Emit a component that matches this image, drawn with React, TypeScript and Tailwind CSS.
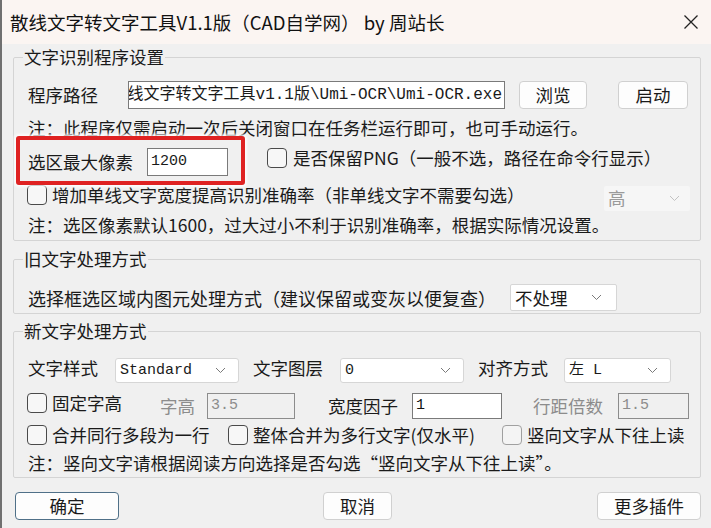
const SANS = "font-['Noto_Sans_CJK_SC',sans-serif]";
const MONO = "font-['Liberation_Mono','Noto_Sans_CJK_SC',monospace]";

function Check({ light }: { light?: boolean }) {
  return (
    <span
      className={
        light
          ? 'block w-[20px] h-[20px] shrink-0 rounded-[4px] border border-[#a0a0a0] bg-[#f4f4f4]'
          : 'block w-[20px] h-[20px] shrink-0 rounded-[4px] border border-[#4a4a4a] bg-[#f7f7f7]'
      }
    />
  );
}

function Chevron({ light }: { light?: boolean }) {
  return (
    <svg width="11" height="7" viewBox="0 0 11 7" className="shrink-0">
      <path d="M1 1l4.5 4.5L10 1" fill="none" stroke={light ? '#c2c2c2' : '#7a7a7a'} strokeWidth="1" />
    </svg>
  );
}

function Select({ value, w, mono }: { value: string; w: string; mono?: boolean }) {
  return (
    <div className={`${w} h-[25px] flex items-center justify-between bg-white border border-[#d6d6d6] rounded-[3px] pl-[4px] pr-[12px]`}>
      <span className={mono ? `${MONO} text-[15px] leading-none text-[#1a1a1a]` : 'leading-none text-[#1a1a1a]'}>{value}</span>
      <Chevron />
    </div>
  );
}

function Box({ value, w, disabled }: { value: string; w: string; disabled?: boolean }) {
  return (
    <div
      className={
        disabled
          ? `${w} h-[26px] flex items-center border border-[#8c8c8c] bg-[#f0f0f0] pl-[3px] ${MONO} text-[15px] text-[#8c8c8c]`
          : `${w} h-[26px] flex items-center border border-[#7a7a7a] bg-white pl-[3px] ${MONO} text-[15px] text-[#111]`
      }
    >
      {value}
    </div>
  );
}

function Btn({ label, w, focus }: { label: string; w: string; focus?: boolean }) {
  return (
    <div
      className={
        focus
          ? `${w} h-[28px] flex items-center justify-center rounded-[4px] border border-[#4f7088] bg-[#fdfdfd] text-[#1a1a1a]`
          : `${w} h-[28px] flex items-center justify-center rounded-[4px] border border-[#d0d0d0] bg-[#fdfdfd] text-[#1a1a1a]`
      }
    >
      {label}
    </div>
  );
}

export default function App() {
  return (
    <div className={`${SANS} w-[711px] h-[528px] overflow-hidden bg-[#f0f0f0] border-l-2 border-[#707070] text-[#1a1a1a] leading-[22px] text-[17.5px]`}>
      {/* 标题栏 */}
      <div className="h-[44px] bg-[#fbf5f2] flex items-center justify-between pl-[8px] pr-[12px]">
        <span className="text-[18.5px] text-[#111]">散线文字转文字工具V1.1版（CAD自学网） by 周站长</span>
        <svg width="16" height="16" viewBox="0 0 16 16">
          <path d="M1.5 1.5l13 13M14.5 1.5l-13 13" stroke="#222" strokeWidth="1.3" fill="none" />
        </svg>
      </div>

      {/* 文字识别程序设置 */}
      <fieldset className="ml-[11px] mt-[2px] w-[688px] border border-[#d4d4d4] rounded-[2px] pl-[14px] pr-[10px] pb-[4px]">
        <legend className="-ml-[5px] px-[1px] leading-[22px]">文字识别程序设置</legend>
        <div className="mt-[13px] h-[28px] flex items-center">
          <span className="w-[100px] shrink-0">程序路径</span>
          <div className="w-[377px] h-[28px] border border-[#7a7a7a] bg-white flex items-center justify-end overflow-hidden whitespace-nowrap pr-[2px]">
            <span className={`${MONO} text-[16px]`}>线文字转文字工具v1.1版\Umi-OCR\Umi-OCR.exe</span>
          </div>
          <Btn label="浏览" w="w-[68px] ml-[14px]" />
          <Btn label="启动" w="w-[70px] ml-[31px]" />
        </div>
        <div className="mt-[8px] h-[22px]">注：此程序仅需启动一次后关闭窗口在任务栏运行即可，也可手动运行。</div>
        <div className="mt-[9px] h-[28px] flex items-center">
          <div className="relative flex items-center">
            <span className="w-[119px] shrink-0">选区最大像素</span>
            <div className={`w-[81px] h-[28px] border border-[#7a7a7a] bg-white flex items-center pl-[3px] ${MONO} text-[15px]`}>1200</div>
            <div className="absolute -left-[12px] -top-[12px] w-[229px] h-[49px] border-4 border-[#df2222] rounded-[3px] shadow-[0_0_3px_2px_rgba(255,255,255,0.85)]" />
          </div>
          <div className="ml-[39px] -mt-[8px] flex items-center gap-[6px]">
            <Check />
            <span>是否保留PNG（一般不选，路径在命令行显示）</span>
          </div>
        </div>
        <div className="mt-[9px] h-[26px] flex items-center">
          <div className="-ml-[1px] -mt-[6px] flex items-center gap-[5px]">
            <Check />
            <span>增加单线文字宽度提高识别准确率（非单线文字不需要勾选）</span>
          </div>
          <div className="ml-auto w-[86px] h-[25px] flex items-center justify-between bg-[#f6f6f6] rounded-[2px] pl-[4px] pr-[10px]">
            <span className="text-[#9a9a9a]">高</span>
            <Chevron light />
          </div>
        </div>
        <div className="mt-[3px] h-[22px]">注：选区像素默认1600，过大过小不利于识别准确率，根据实际情况设置。</div>
      </fieldset>

      {/* 旧文字处理方式 */}
      <fieldset className="ml-[11px] mt-[7px] w-[688px] border border-[#d4d4d4] rounded-[2px] pl-[14px] pr-[10px] pb-[2px]">
        <legend className="-ml-[5px] px-[1px] leading-[22px]">旧文字处理方式</legend>
        <div className="mt-[14px] h-[27px] flex items-center">
          <span className="w-[482px] shrink-0 text-[18px]">选择框选区域内图元处理方式（建议保留或变灰以便复查）</span>
          <div className="w-[107px] h-[27px] flex items-center justify-between bg-white border border-[#d6d6d6] rounded-[2px] pl-[4px] pr-[14px]">
            <span>不处理</span>
            <Chevron />
          </div>
        </div>
      </fieldset>

      {/* 新文字处理方式 */}
      <fieldset className="ml-[11px] mt-[6px] w-[688px] border border-[#d4d4d4] rounded-[2px] pl-[14px] pr-[10px] pb-[3px]">
        <legend className="-ml-[5px] px-[1px] leading-[22px]">新文字处理方式</legend>
        <div className="mt-[16px] h-[25px] flex items-center">
          <span className="w-[87px] shrink-0 -mt-[6px]">文字样式</span>
          <Select value="Standard" w="w-[124px]" mono />
          <span className="ml-[14px] w-[87px] shrink-0 -mt-[6px]">文字图层</span>
          <Select value="0" w="w-[124px]" mono />
          <span className="ml-[14px] w-[86px] shrink-0 -mt-[6px]">对齐方式</span>
          <Select value="左 L" w="w-[107px]" mono />
        </div>
        <div className="mt-[10px] h-[26px] flex items-center">
          <div className="-ml-[1px] w-[133px] shrink-0 -mt-[6px] flex items-center gap-[5px]">
            <Check />
            <span>固定字高</span>
          </div>
          <span className="w-[47px] shrink-0 text-[#8c8c8c]">字高</span>
          <Box value="3.5" w="w-[88px]" disabled />
          <span className="ml-[33px] w-[84px] shrink-0">宽度因子</span>
          <Box value="1" w="w-[90px]" />
          <span className="ml-[31px] w-[85px] shrink-0 text-[#8c8c8c]">行距倍数</span>
          <Box value="1.5" w="w-[71px]" disabled />
        </div>
        <div className="mt-[5px] h-[22px] flex items-center">
          <div className="-ml-[1px] w-[201px] shrink-0 flex items-center gap-[5px]">
            <Check />
            <span>合并同行多段为一行</span>
          </div>
          <div className="w-[274px] shrink-0 flex items-center gap-[5px]">
            <Check />
            <span>整体合并为多行文字(仅水平)</span>
          </div>
          <div className="flex items-center gap-[5px]">
            <Check light />
            <span>竖向文字从下往上读</span>
          </div>
        </div>
        <div className="mt-[6px] h-[22px]">注：竖向文字请根据阅读方向选择是否勾选“竖向文字从下往上读”。</div>
      </fieldset>

      {/* 按钮 */}
      <div className="mt-[14px] flex items-center">
        <Btn label="确定" w="w-[104px] ml-[13px]" focus />
        <Btn label="取消" w="w-[69px] ml-[204px]" />
        <Btn label="更多插件" w="w-[104px] ml-[205px]" />
      </div>
    </div>
  );
}
